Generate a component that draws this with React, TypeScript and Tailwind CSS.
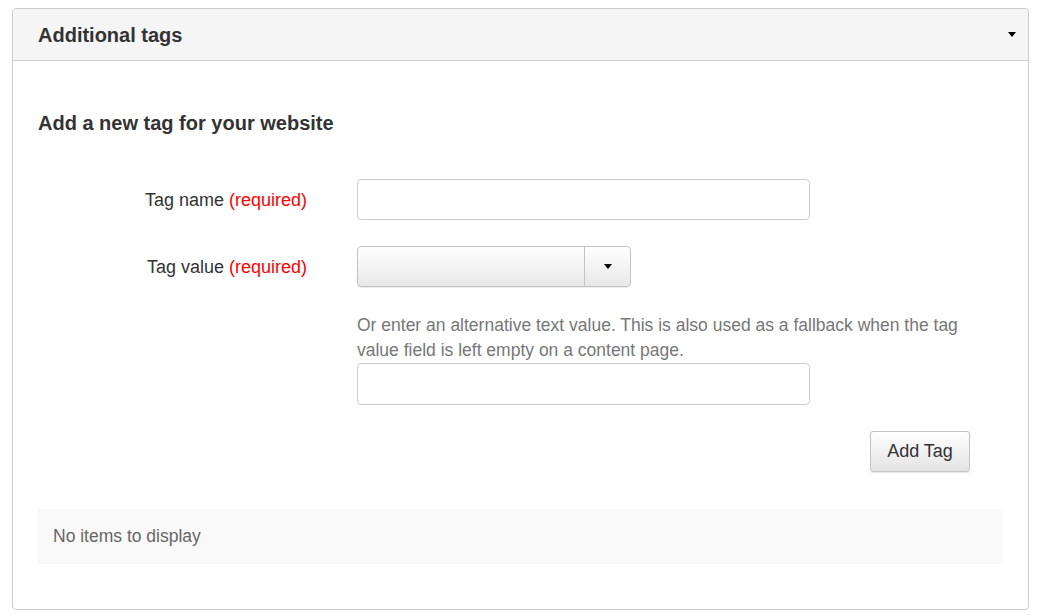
import React from 'react';

const Caret = () => (
  <span className="inline-block h-0 w-0 border-x-[4.5px] border-t-[5px] border-x-transparent border-t-black" />
);

const Label = ({ text }: { text: string }) => (
  <div className="w-[269px] shrink-0 pt-[2px] text-right text-[18px] text-[#333]">
    {text} <span className="text-[#ff0000]">(required)</span>
  </div>
);

export default function App() {
  return (
    <div className="min-h-[616px] bg-white pl-[12px] pt-[8px]" style={{ fontFamily: '"Liberation Sans", Arial, sans-serif' }}>
      <div className="h-[602px] w-[1017px] rounded-[4px] border border-[#cccccc] bg-white">
        {/* header */}
        <div className="flex h-[52px] items-center justify-between rounded-t-[4px] border-b border-[#cccccc] bg-[#f5f5f5] pl-[25px] pr-[12px]">
          <h2 className="text-[20px] font-bold text-[#333]">Additional tags</h2>
          <Caret />
        </div>

        <div className="px-[25px]">
          <h3 className="mt-[50px] text-[20px] font-bold leading-[24px] text-[#333]">Add a new tag for your website</h3>

          {/* tag name */}
          <div className="mt-[44px] flex items-center">
            <Label text="Tag name" />
            <div className="ml-[50px] h-[41px] w-[453px] rounded-[4px] border border-[#cccccc] bg-white" />
          </div>

          {/* tag value */}
          <div className="mt-[26px] flex items-center">
            <Label text="Tag value" />
            <div className="ml-[50px] flex h-[41px] w-[274px] overflow-hidden rounded-[4px] border border-[#c4c4c4] bg-gradient-to-b from-white to-[#e8e8e8] shadow-[0_1px_1px_rgba(0,0,0,0.08)]">
              <div className="flex-1" />
              <div className="flex w-[46px] items-center justify-center border-l border-[#c4c4c4]">
                <Caret />
              </div>
            </div>
          </div>

          {/* alt text */}
          <div className="ml-[319px] mt-[26px] w-[613px]">
            <p className="text-[17.5px] leading-[25px] text-[#777]">
              Or enter an alternative text value. This is also used as a fallback when the tag value field is left empty on a content page.
            </p>
            <div className="h-[42px] w-[453px] rounded-[4px] border border-[#cccccc] bg-white" />
            <div className="mt-[26px] flex justify-end">
              <button className="h-[41px] w-[100px] rounded-[3px] border border-[#c4c4c4] bg-gradient-to-b from-white to-[#e4e4e4] text-[18px] text-[#333] shadow-[0_1px_1px_rgba(0,0,0,0.1)]">
                Add Tag
              </button>
            </div>
          </div>

          {/* list */}
          <div className="mt-[37px] flex h-[55px] items-center bg-[#f9f9f9] px-[15px] text-[17.5px] text-[#666]">
            No items to display
          </div>
        </div>
      </div>
    </div>
  );
}
